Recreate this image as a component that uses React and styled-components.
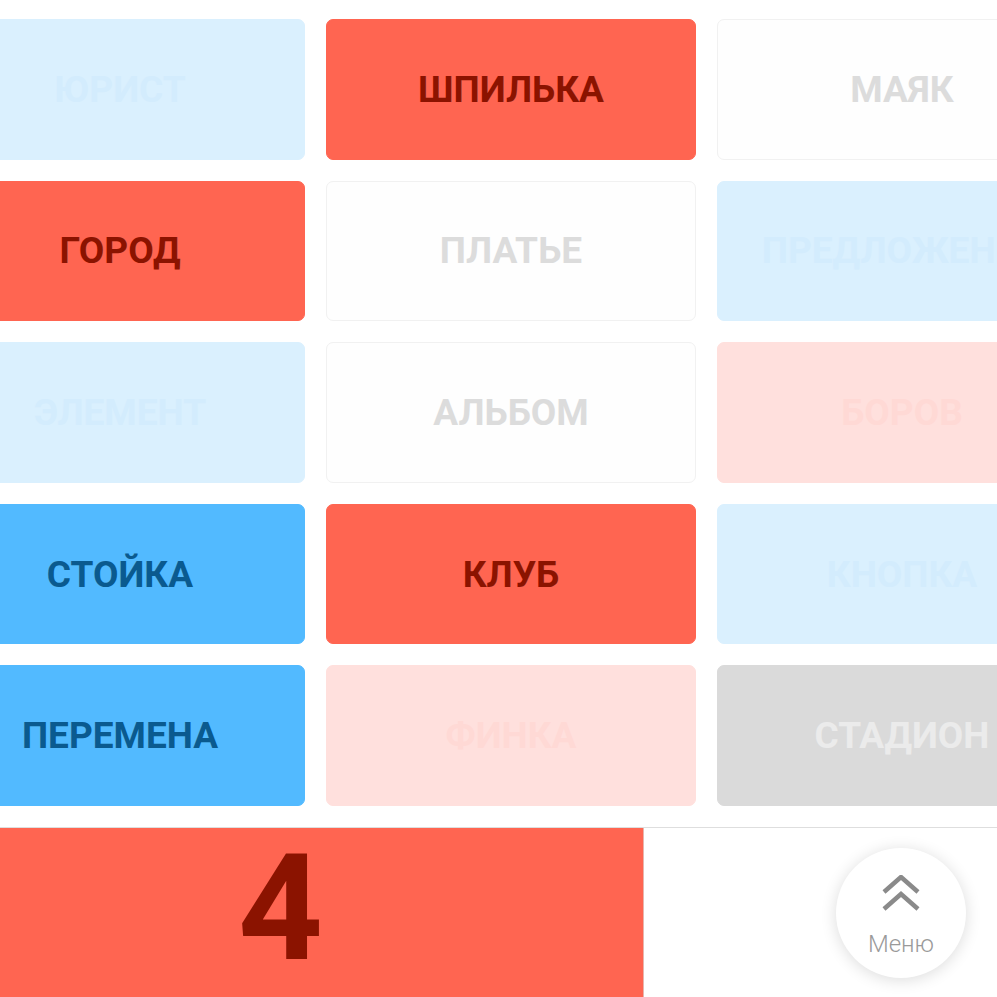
import React from "react";
import styled, { createGlobalStyle } from "styled-components";

const Global = createGlobalStyle`
  html, body { margin: 0; padding: 0; background: #fff; overflow: hidden; }
  body { font-family: Roboto, "Noto Sans", sans-serif; width: 997px; height: 997px; }
`;

const Page = styled.div`
  width: 997px;
  height: 997px;
  overflow: hidden;
  display: flex;
  flex-direction: column;
  gap: 21px;
  padding-top: 19px;
  box-sizing: border-box;
`;

const Grid = styled.div`
  display: grid;
  grid-template-columns: repeat(3, 370px);
  grid-auto-rows: 140.6px;
  gap: 21px;
  margin-left: -65px;
`;

const palettes = {
  red: { bg: "#ff6551", fg: "#8b1300", border: "#ff6551" },
  blue: { bg: "#52baff", fg: "#0a5a8f", border: "#52baff" },
  lightBlue: { bg: "#daf0fe", fg: "#d3ecfd", border: "#daf0fe" },
  white: { bg: "#fefefe", fg: "#dcdcdc", border: "#f1f1f1" },
  pink: { bg: "#ffe0dd", fg: "#ffd9d5", border: "#ffe0dd" },
  gray: { bg: "#dadada", fg: "#ebebeb", border: "#dadada" },
};

const Card = styled.div`
  display: flex;
  align-items: center;
  justify-content: center;
  border-radius: 7px;
  box-sizing: border-box;
  background: ${(p) => palettes[p.$kind].bg};
  border: 1px solid ${(p) => palettes[p.$kind].border};
  color: ${(p) => palettes[p.$kind].fg};
  font-family: Roboto, sans-serif;
  font-weight: 700;
  font-size: 37px;
  letter-spacing: 0;
  white-space: nowrap;
  overflow: hidden;
`;

const Bottom = styled.div`
  display: flex;
  height: 170px;
  border-top: 1px solid #dedede;
  flex-shrink: 0;
`;

const Score = styled.div`
  width: 644px;
  background: #ff6551;
  border-right: 1px solid #e8b5ad;
  display: flex;
  align-items: center;
  justify-content: flex-start;
  padding-left: 238px;
  padding-bottom: 8px;
  box-sizing: border-box;
  color: #8b1300;
  font-family: Roboto, sans-serif;
  font-weight: 700;
  font-size: 148px;
  line-height: 1;
`;

const Right = styled.div`
  flex: 1;
  display: flex;
  align-items: center;
  justify-content: flex-end;
  padding-right: 31px;
`;

const MenuButton = styled.div`
  width: 130px;
  height: 130px;
  border-radius: 50%;
  background: #fff;
  box-shadow: 0 2px 16px rgba(0, 0, 0, 0.14);
  display: flex;
  flex-direction: column;
  align-items: center;
  justify-content: flex-start;
  gap: 21px;
  padding-top: 27px;
  box-sizing: border-box;
`;

const MenuLabel = styled.span`
  font-family: Roboto, sans-serif;
  font-weight: 300;
  font-size: 24px;
  color: #9a9a9a;
  line-height: 1;
`;

const ChevronsUp = () => (
  <svg width="38" height="36" viewBox="0 0 38 36" fill="none">
    <path d="M2 17 L19 2 L36 17" stroke="#8a8a8a" strokeWidth="4.5" />
    <path d="M2 34 L19 19 L36 34" stroke="#8a8a8a" strokeWidth="4.5" />
  </svg>
);

const cards = [
  ["ЮРИСТ", "lightBlue"],
  ["ШПИЛЬКА", "red"],
  ["МАЯК", "white"],
  ["ГОРОД", "red"],
  ["ПЛАТЬЕ", "white"],
  ["ПРЕДЛОЖЕНИЕ", "lightBlue"],
  ["ЭЛЕМЕНТ", "lightBlue"],
  ["АЛЬБОМ", "white"],
  ["БОРОВ", "pink"],
  ["СТОЙКА", "blue"],
  ["КЛУБ", "red"],
  ["КНОПКА", "lightBlue"],
  ["ПЕРЕМЕНА", "blue"],
  ["ФИНКА", "pink"],
  ["СТАДИОН", "gray"],
];

export default function App() {
  return (
    <>
      <Global />
      <Page>
        <Grid>
          {cards.map(([word, kind]) => (
            <Card key={word} $kind={kind}>
              {word}
            </Card>
          ))}
        </Grid>
        <Bottom>
          <Score>4</Score>
          <Right>
            <MenuButton>
              <ChevronsUp />
              <MenuLabel>Меню</MenuLabel>
            </MenuButton>
          </Right>
        </Bottom>
      </Page>
    </>
  );
}
